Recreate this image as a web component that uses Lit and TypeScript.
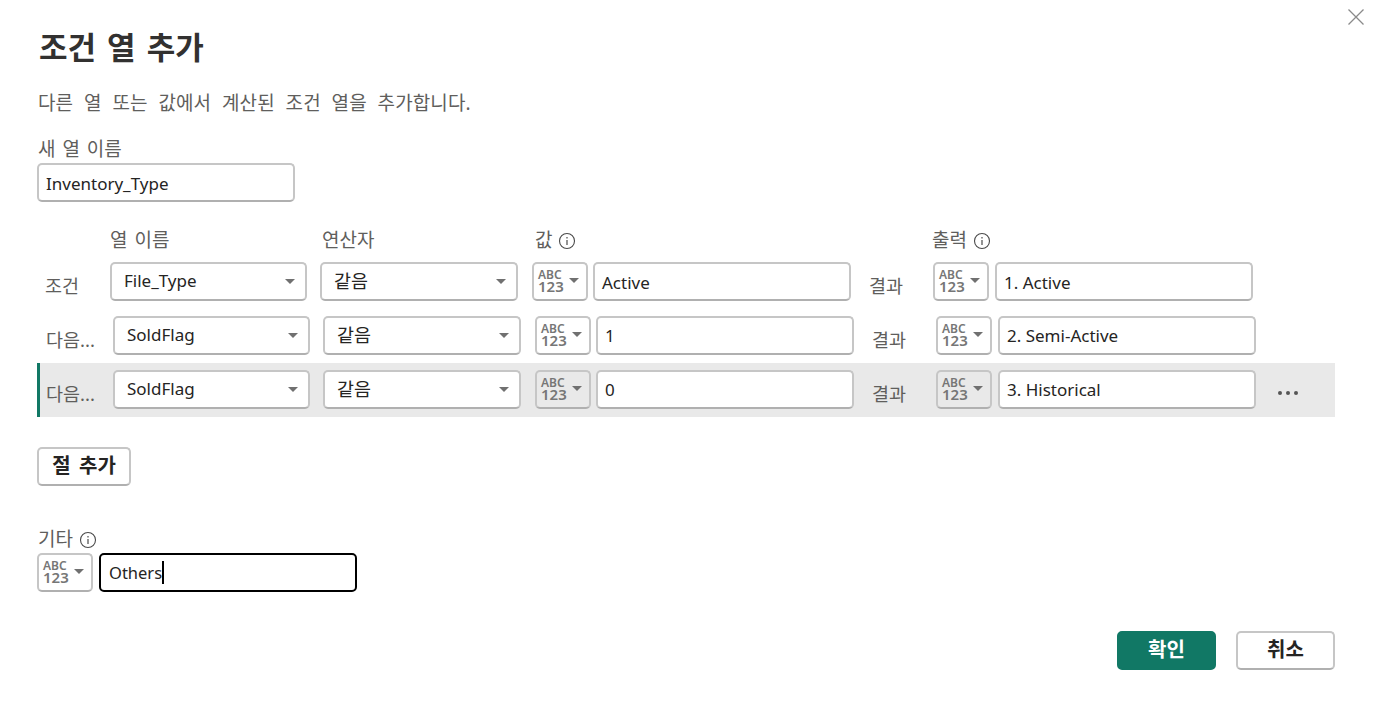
import { LitElement, html, css, svg } from 'lit';
import { customElement } from 'lit/decorators.js';

const arrow = html`<svg class="arrow" width="10" height="5" viewBox="0 0 10 5"><path d="M0 0h10L5 5z" fill="#707070"/></svg>`;
const info = html`<svg class="info" width="18" height="18" viewBox="0 0 18 18" fill="none" stroke="#4a4a4a">
  ${svg`<circle cx="9" cy="9" r="7.5" stroke-width="1.1"/><path d="M9 8v5" stroke-width="1.2"/><path d="M9 5v1.4" stroke-width="1.2"/>`}
</svg>`;

interface Row {
  label: string;
  column: string;
  value: string;
  output: string;
}

const rows: Row[] = [
  { label: '조건', column: 'File_Type', value: 'Active', output: '1. Active' },
  { label: '다음...', column: 'SoldFlag', value: '1', output: '2. Semi-Active' },
  { label: '다음...', column: 'SoldFlag', value: '0', output: '3. Historical' },
];

@customElement('app-root')
export class AppRoot extends LitElement {
  static styles = css`
    :host {
      display: block;
      width: 1377px;
      height: 710px;
      background: #fff;
      position: relative;
      overflow: hidden;
      font-family: 'Noto Sans', 'Noto Sans CJK KR', sans-serif;
      font-size: 17px;
      color: #605e5c;
    }

    .dialog {
      padding: 27px 42px 0 38px;
    }

    .close {
      position: absolute;
      top: 9px;
      left: 1348px;
    }

    h1 {
      margin: 0 0 0 1px;
      font-size: 31px;
      line-height: 38px;
      font-weight: 700;
      color: #323130;
      font-family: 'Noto Sans CJK KR', sans-serif;
      word-spacing: 4px;
    }

    .desc {
      margin-top: 26px;
      line-height: 24px;
      font-size: 19px;
      letter-spacing: 0.1px;
      word-spacing: 5.8px;
    }

    .label {
      box-sizing: border-box;
      height: 24px;
      padding-top: 2px;
      line-height: 22px;
      font-size: 19px;
      word-spacing: 2px;
    }

    .name-label {
      margin-top: 21px;
    }

    .name-input {
      margin-top: 3px;
      margin-left: -1px;
      width: 258px;
      padding-top: 2px;
      padding-left: 8px;
    }

    .box {
      box-sizing: border-box;
      height: 39px;
      border: 2px solid #c6c6c6;
      border-bottom-color: #b0b0b0;
      border-radius: 5px;
      background: #fff;
      display: flex;
      align-items: center;
      padding-left: 7px;
      padding-right: 7px;
      font-size: 17px;
      color: #252423;
      flex: none;
    }

    .header {
      margin-top: 25px;
      display: flex;
      align-items: center;
      height: 24px;
      margin-bottom: 4px;
    }

    .header .label,
    .else-label {
      display: flex;
      align-items: center;
      gap: 6px;
    }

    .info {
      margin-top: 2px;
    }

    .h-col { margin-left: 72px; width: 212px; }
    .h-op { width: 213px; }
    .h-val { width: 397px; }

    .rows {
      margin-left: -1px;
    }

    .row {
      box-sizing: border-box;
      height: 54px;
      padding-top: 7px;
      display: flex;
      align-items: flex-start;
      padding-left: 9px;
    }

    .row.selected {
      background: #e9e9e9;
      border-left: 3px solid #117865;
      padding-left: 6px;
    }

    .row-label {
      width: 67px;
      flex: none;
      line-height: 24px;
      padding-top: 12px;
      font-size: 18.5px;
    }

    .row.first .row-label {
      width: 64px;
      margin-left: -1px;
      margin-right: 1px;
    }

    .select {
      justify-content: space-between;
      padding: 0 10px 2px 12px;
    }

    .select.col {
      width: 197px;
      margin-right: 13px;
    }

    .select.op {
      width: 198px;
      margin-right: 14px;
      padding-bottom: 3px;
      font-size: 18.5px;
    }

    .select .arrow {
      margin-top: 2px;
    }

    .type {
      width: 56px;
      margin-right: 5px;
      padding: 0 0 2px 4px;
      gap: 5px;
    }

    .type.out {
      margin-right: 6px;
    }

    .row.selected .type {
      background: transparent;
    }

    .type-text {
      font-weight: 600;
      color: #767676;
      display: flex;
      flex-direction: column;
      align-items: flex-start;
      width: 26px;
    }

    .type-text .a {
      font-size: 12px;
      line-height: 11px;
    }

    .type-text .n {
      font-size: 15px;
      line-height: 13px;
    }

    .value {
      width: 258px;
    }

    .row.first .value {
      padding-top: 2px;
    }

    .result {
      width: 64px;
      margin-left: 18px;
      flex: none;
      line-height: 24px;
      padding-top: 12px;
      font-size: 18.5px;
    }

    .more {
      display: flex;
      gap: 4px;
      margin-left: 22px;
      padding-top: 21px;
    }

    .more i {
      width: 4px;
      height: 4px;
      border-radius: 50%;
      background: #555;
    }

    .btn {
      box-sizing: border-box;
      display: flex;
      align-items: center;
      justify-content: center;
      height: 39px;
      padding-bottom: 5px;
      border: 2px solid #c6c6c6;
      border-bottom-color: #b0b0b0;
      border-radius: 5px;
      background: #fff;
      color: #252423;
      font-weight: 700;
      font-size: 20px;
      font-family: 'Noto Sans CJK KR', sans-serif;
      word-spacing: 4px;
    }

    .add {
      margin-top: 30px;
      margin-left: -1px;
      width: 94px;
    }

    .else-label {
      margin-top: 40px;
    }

    .else {
      margin-top: 3px;
      margin-left: -1px;
      display: flex;
    }

    .else .type {
      margin-right: 6px;
    }

    .else .focus {
      width: 258px;
      border-color: #000;
      padding-left: 8px;
      font-size: 16.5px;
    }

    .caret {
      width: 2px;
      height: 23px;
      background: #000;
    }

    .footer {
      margin-top: 39px;
      display: flex;
      justify-content: flex-end;
      gap: 20px;
    }

    .footer .btn {
      width: 99px;
    }

    .footer .primary {
      background: #117865;
      border-color: #117865;
      color: #fff;
    }
  `;

  private renderType(extra = '') {
    return html`<div class="box type ${extra}">
      <div class="type-text"><span class="a">ABC</span><span class="n">123</span></div>
      ${arrow}
    </div>`;
  }

  private renderRow(row: Row, index: number) {
    const cls = `row ${index === 0 ? 'first' : ''} ${index === 2 ? 'selected' : ''}`;
    return html`<div class=${cls}>
      <div class="row-label">${row.label}</div>
      <div class="box select col">${row.column}${arrow}</div>
      <div class="box select op">같음${arrow}</div>
      ${this.renderType()}
      <div class="box value">${row.value}</div>
      <div class="result">결과</div>
      ${this.renderType('out')}
      <div class="box value">${row.output}</div>
      ${index === 2 ? html`<div class="more"><i></i><i></i><i></i></div>` : ''}
    </div>`;
  }

  render() {
    return html`
      <svg class="close" width="16" height="16" viewBox="0 0 16 16" fill="none" stroke="#8a8a8a" stroke-width="1.3">
        <path d="M0.5 0.5l15 15M15.5 0.5l-15 15" />
      </svg>
      <div class="dialog">
        <h1>조건 열 추가</h1>
        <div class="desc">다른 열 또는 값에서 계산된 조건 열을 추가합니다.</div>
        <div class="label name-label">새 열 이름</div>
        <div class="box name-input">Inventory_Type</div>
        <div class="header">
          <div class="label h-col">열 이름</div>
          <div class="label h-op">연산자</div>
          <div class="label h-val">값 ${info}</div>
          <div class="label">출력 ${info}</div>
        </div>
        <div class="rows">${rows.map((r, i) => this.renderRow(r, i))}</div>
        <div class="btn add">절 추가</div>
        <div class="label else-label">기타 ${info}</div>
        <div class="else">
          ${this.renderType()}
          <div class="box focus">Others<span class="caret"></span></div>
        </div>
        <div class="footer">
          <div class="btn primary">확인</div>
          <div class="btn">취소</div>
        </div>
      </div>
    `;
  }
}
